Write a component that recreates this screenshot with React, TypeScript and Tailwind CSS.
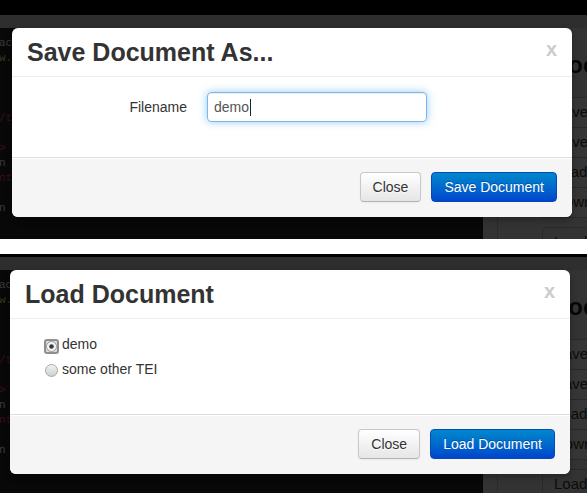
import React from "react";

const codeLines: { t: string; c: string }[] = [
  { t: "acc", c: "text-[#3b3b3b]" },
  { t: "w.t", c: "text-[#3a3620]" },
  { t: "", c: "" },
  { t: "", c: "" },
  { t: "", c: "" },
  { t: "/ti", c: "text-[#3a0e1c]" },
  { t: "", c: "" },
  { t: ">", c: "text-[#420e1e]" },
  { t: "n I", c: "text-[#3b3b3b]" },
  { t: "nt>", c: "text-[#3a0e1c]" },
  { t: "", c: "" },
  { t: "n a", c: "text-[#3b3b3b]" },
];

function Page() {
  return (
    <div className="w-[587px]">
      <div className="h-[15px] bg-black" />
      <div className="h-[13px] bg-[#2e2e2e]" />
      <div className="flex h-[260px]">
        <div className="w-[483px] shrink-0 bg-[#080808] pt-[8px] [font-family:'Liberation_Mono',monospace] text-[11px] leading-[15px]">
          {codeLines.map((l, i) => (
            <div key={i} className={`h-[15px] -ml-[1px] whitespace-nowrap ${l.c}`}>
              {l.t}
            </div>
          ))}
        </div>
        <div className="min-w-0 flex-1 overflow-hidden bg-[#333333] pl-[14px]">
          <div className="h-full w-[200px] border-l border-[#2a2a2a] pl-[44px] pt-[22px]">
            <div className="whitespace-nowrap pl-[9px] text-[24px] font-bold leading-[30px] text-[#060606]">
              Document
            </div>
            <div className="mt-[17px] border-t border-[#292929]">
              {["Save", "Save As", "Load", "Download"].map((r) => (
                <div
                  key={r}
                  className="flex h-[30px] items-center whitespace-nowrap border-b border-[#292929] bg-[#363636] pl-[12px] text-[15px] text-[#0c0c0c]"
                >
                  {r}
                </div>
              ))}
            </div>
            <div className="mt-[9px] flex h-[30px] items-center whitespace-nowrap rounded-[4px] border border-[#292929] bg-[#333] px-[11px] text-[15px] text-[#0c0c0c]">
              Load
            </div>
          </div>
        </div>
      </div>
    </div>
  );
}

function CloseBtn() {
  return (
    <button className="h-[30px] rounded-[4px] border border-[#c8c8c8] border-b-[#b3b3b3] bg-linear-to-b from-white to-[#e6e6e6] px-[12px] text-[14px] leading-[20px] text-[#333] shadow-[inset_0_1px_0_rgba(255,255,255,0.2),0_1px_2px_rgba(0,0,0,0.05)] [text-shadow:0_1px_1px_rgba(255,255,255,0.75)]">
      Close
    </button>
  );
}

function PrimaryBtn({ label }: { label: string }) {
  return (
    <button className="h-[30px] rounded-[4px] border border-[#0a47b8] bg-linear-to-b from-[#0088cc] to-[#0044cc] px-[12px] text-[14px] leading-[20px] text-white [text-shadow:0_-1px_0_rgba(0,0,0,0.25)]">
      {label}
    </button>
  );
}

function Header({ title }: { title: string }) {
  return (
    <div className="flex items-start justify-between border-b border-[#eeeeee] px-[15px] py-[9px]">
      <h3 className="text-[25px] font-bold leading-[30px] text-[#333]">{title}</h3>
      <span className="mt-[2px] text-[20px] font-bold leading-[20px] text-[#cccccc]">x</span>
    </div>
  );
}

function Footer({ label }: { label: string }) {
  return (
    <div className="flex justify-end gap-[10px] rounded-b-[6px] border-t border-[#dddddd] bg-[#f5f5f5] px-[15px] pb-[15px] pt-[14px] shadow-[inset_0_1px_0_#fff]">
      <CloseBtn />
      <PrimaryBtn label={label} />
    </div>
  );
}

function FocusedRadio() {
  return (
    <svg width="15" height="15" viewBox="0 0 15 15" className="mt-[5px] shrink-0">
      <rect x="1" y="1" width="13" height="13" rx="2" fill="#dcdcdc" stroke="#8f8f8f" strokeWidth="2" />
      <circle cx="7.5" cy="7.5" r="5" fill="#f4f4f4" stroke="#9a9a9a" strokeWidth="1" />
      <circle cx="7.5" cy="7.5" r="2.3" fill="#3a3a3a" />
    </svg>
  );
}

function Radio() {
  return (
    <svg width="13" height="13" viewBox="0 0 13 13" className="ml-[1px] mt-[5px] shrink-0">
      <defs>
        <linearGradient id="rg" x1="0" y1="0" x2="0" y2="1">
          <stop offset="0" stopColor="#f2f2f2" />
          <stop offset="1" stopColor="#cfcfcf" />
        </linearGradient>
      </defs>
      <circle cx="6.5" cy="6.5" r="6" fill="url(#rg)" stroke="#a9a9a9" strokeWidth="1" />
    </svg>
  );
}

export default function App() {
  return (
    <div className="w-[587px] h-[493px] overflow-hidden bg-white [font-family:'Liberation_Sans',Arial,sans-serif]">
      {/* Top screenshot: Save dialog */}
      <div className="relative h-[239px] overflow-hidden bg-[#070707]">
        <Page />
        <div className="absolute left-[12px] top-[28px] w-[560px] rounded-[6px] bg-white shadow-[0_3px_7px_rgba(0,0,0,0.3)]">
          <Header title="Save Document As..." />
          <div className="p-[15px]">
            <div className="flex pb-[20px]">
              <label className="w-[160px] pt-[5px] text-right text-[14px] leading-[20px] text-[#333]">
                Filename
              </label>
              <div className="ml-[20px] flex h-[30px] w-[220px] items-center rounded-[4px] border border-[rgba(82,168,236,0.8)] px-[6px] text-[14px] leading-[20px] text-[#555] shadow-[inset_0_1px_1px_rgba(0,0,0,0.075),0_0_8px_rgba(82,168,236,0.6)]">
                demo
                <span className="ml-[1px] h-[17px] w-[1px] bg-[#222]" />
              </div>
            </div>
          </div>
          <Footer label="Save Document" />
        </div>
      </div>

      <div className="h-[15px] bg-white" />

      {/* Bottom screenshot: Load dialog */}
      <div className="relative h-[239px] overflow-hidden bg-[#0b0b0b]">
        <div className="-mt-[12px]">
          <Page />
        </div>
        <div className="absolute left-[10px] top-[16px] w-[560px] rounded-[6px] bg-white shadow-[0_3px_7px_rgba(0,0,0,0.3)]">
          <Header title="Load Document" />
          <div className="p-[15px] pl-[34px]">
            <div className="pb-[20px] text-[14px] leading-[20px] text-[#333]">
              <label className="flex h-[20px] items-start">
                <span className="flex w-[18px] shrink-0">
                  <FocusedRadio />
                </span>
                demo
              </label>
              <label className="mt-[5px] flex h-[20px] items-start">
                <span className="flex w-[18px] shrink-0">
                  <Radio />
                </span>
                some other TEI
              </label>
            </div>
          </div>
          <Footer label="Load Document" />
        </div>
      </div>
    </div>
  );
}
